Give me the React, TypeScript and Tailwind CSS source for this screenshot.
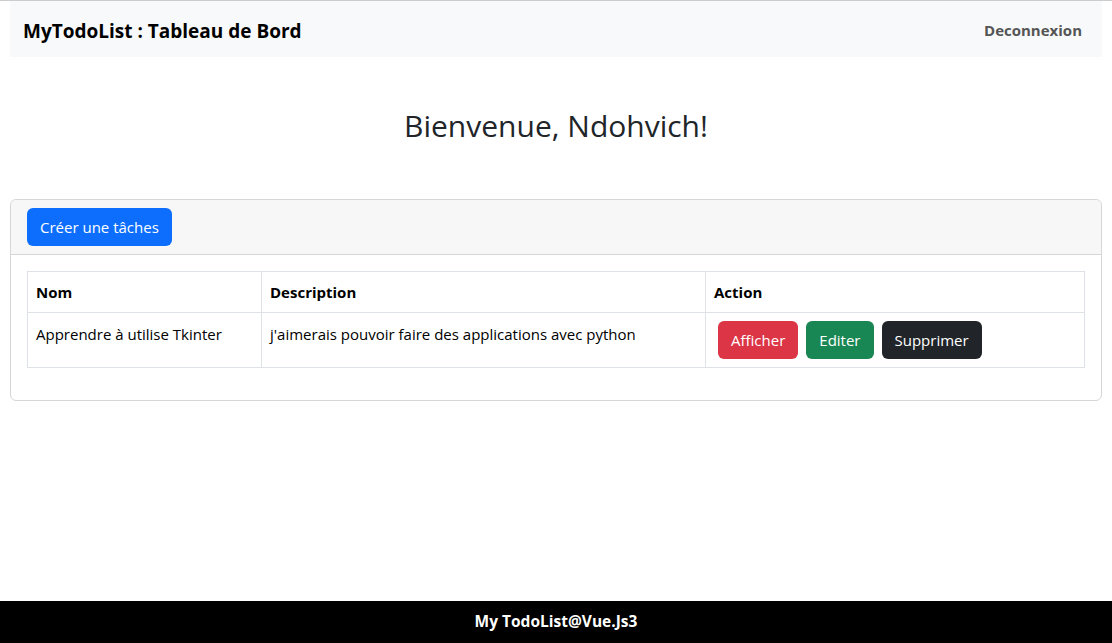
const font = "font-['Segoe_UI','Open_Sans','Noto_Sans',sans-serif]";

type Task = {
    nom: string;
    description: string;
};

const tasks: Task[] = [
    {
        nom: "Apprendre à utilise Tkinter",
        description: "j'aimerais pouvoir faire des applications avec python",
    },
];

function Navbar() {
    return (
        <nav className="flex h-[56px] items-center justify-between bg-[#f8f9fa] px-[13px]">
            <span className="mt-[5px] text-[19px] font-bold text-black">MyTodoList : Tableau de Bord</span>
            <a href="#" className="mt-[2px] pr-[7px] text-[15px] font-bold text-[#555555]">
                Deconnexion
            </a>
        </nav>
    );
}

function TaskTable() {
    return (
        <table className="w-full border-collapse text-[15px] leading-6 text-black">
            <thead>
                <tr>
                    <th className="w-[234px] border border-[#dee2e6] px-2 py-2 text-left font-bold">Nom</th>
                    <th className="w-[444px] border border-[#dee2e6] px-2 py-2 text-left font-bold">Description</th>
                    <th className="border border-[#dee2e6] px-2 py-2 text-left font-bold">Action</th>
                </tr>
            </thead>
            <tbody>
                {tasks.map((task) => (
                    <tr key={task.nom}>
                        <td className="border border-[#dee2e6] px-2 pt-[9px] pb-2 align-top">{task.nom}</td>
                        <td className="border border-[#dee2e6] px-2 pt-[9px] pb-2 align-top">{task.description}</td>
                        <td className="border border-[#dee2e6] py-2 pr-2 pl-3 align-top">
                            <div className="flex gap-2">
                                <button className="h-[38px] rounded-[6px] bg-[#dc3545] px-[13px] text-white">Afficher</button>
                                <button className="h-[38px] rounded-[6px] bg-[#198754] px-[13px] text-white">Editer</button>
                                <button className="h-[38px] rounded-[6px] bg-[#212529] px-[13px] text-white">Supprimer</button>
                            </div>
                        </td>
                    </tr>
                ))}
            </tbody>
        </table>
    );
}

export default function App() {
    return (
        <div className={`flex min-h-screen flex-col border-t border-[#cccccc] bg-white ${font}`}>
            <div className="px-[10px]">
                <Navbar />

                <h2 className="mt-[50px] text-center text-[30px] leading-[38px] font-normal text-[#212529]">
                    Bienvenue, Ndohvich!
                </h2>

                <div className="mt-[54px] rounded-[6px] border border-[#d6d6d6]">
                    <div className="rounded-t-[6px] border-b border-[#d6d6d6] bg-[#f7f7f7] px-4 py-2">
                        <button className="h-[38px] rounded-[6px] bg-[#0d6efd] px-[13px] text-[15px] text-white">
                            Créer une tâches
                        </button>
                    </div>
                    <div className="p-4">
                        <div className="mb-4">
                            <TaskTable />
                        </div>
                    </div>
                </div>
            </div>

            <footer className="mt-auto flex h-[42px] items-center justify-center bg-black">
                <span className="text-[15.5px] font-bold text-white">My TodoList@Vue.Js3</span>
            </footer>
        </div>
    );
}
